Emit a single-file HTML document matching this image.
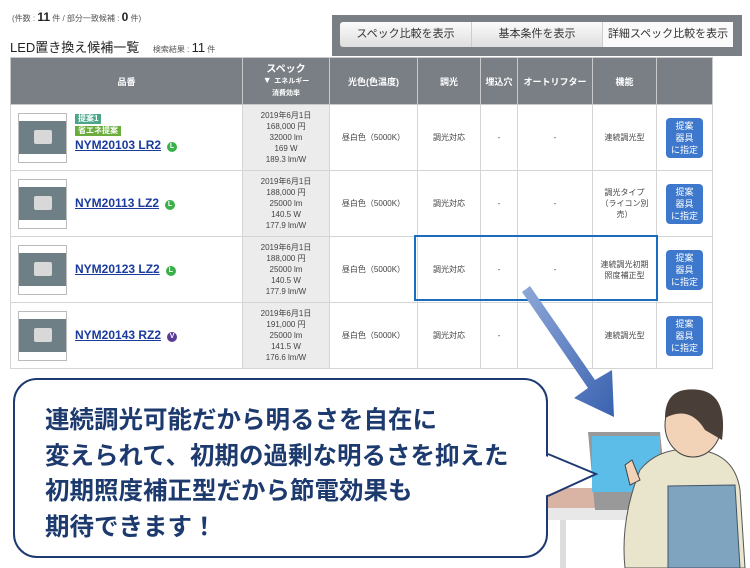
<!DOCTYPE html>
<html><head><meta charset="utf-8"><style>
*{margin:0;padding:0;box-sizing:border-box}
body{width:750px;height:568px;background:#fff;position:relative;overflow:hidden;font-family:"Liberation Sans","Noto Sans CJK JP",sans-serif;color:#333}
.a{position:absolute}
table{border-collapse:collapse;position:absolute;left:10px;top:57px;table-layout:fixed}
td,th{border:1px solid #d4d4d4;text-align:center;font-size:8px;color:#444;font-weight:normal}
th{background:#7a7f85;color:#fff;border-color:#c9c9c9;height:47px;font-weight:bold;font-size:9px}
tr.r td{height:66px}
td.sp{background:#ececec;font-size:8px;line-height:11px}
.img{position:absolute;left:7px;top:8px;width:49px;height:50px;border:1px solid #bbb;background:#fff}
.img i{position:absolute;left:0;right:0;top:7px;height:33px;background:#6e8086}
.img b{position:absolute;left:15px;top:16px;width:18px;height:14px;background:#d8d8d8;border-radius:2px}
.nm{position:absolute;left:64px;font-size:12px;font-weight:bold;color:#1a3a9c;text-decoration:underline}
.ic{display:inline-block;width:10px;height:10px;border-radius:50%;background:#3bb04a;color:#fff;font-size:7px;line-height:10px;text-align:center;margin-left:6px;vertical-align:1px;text-decoration:none}
.btn{display:inline-block;width:37px;height:40px;background:#3d78cc;border-radius:4px;color:#fff;font-size:9px;line-height:12px;padding-top:2px}
.tag{position:absolute;left:64px;font-size:8px;color:#fff;font-weight:bold;padding:0 3px;height:10px;line-height:10px}
.bub{position:absolute;left:13px;top:378px;width:535px;height:180px;border:2px solid #1d3a72;border-radius:24px;background:#fff}
.bt{position:absolute;left:45px;top:403px;font-size:24.5px;line-height:35.5px;color:#1d3a6e;font-weight:bold;white-space:nowrap}
</style></head><body>
<div class="a" style="left:12px;top:10px;font-size:8px;color:#555">(件数 : <b style="font-size:12px;color:#222">11</b> 件 / 部分一致候補 : <b style="font-size:12px;color:#222">0</b> 件)</div>
<div class="a" style="left:10px;top:37px;font-size:13px;color:#222">LED置き換え候補一覧 <span style="font-size:8px;color:#555;margin-left:10px">検索結果 : <span style="font-size:13px;color:#222">11</span> 件</span></div>
<div class="a" style="left:332px;top:15px;width:410px;height:41px;background:#7a7f85"></div>
<div class="a" style="left:340px;top:22px;width:393px;height:25px;border-radius:3px;background:linear-gradient(#fbfbfb,#dedede);font-size:11px;color:#333;display:flex">
<div style="width:132px;text-align:center;line-height:25px;border-right:1px solid #ccc">スペック比較を表示</div>
<div style="width:131px;text-align:center;line-height:25px;border-right:1px solid #ccc">基本条件を表示</div>
<div style="width:130px;text-align:center;line-height:25px;background:#fafafa">詳細スペック比較を表示</div></div>
<table>
<colgroup><col style="width:232px"><col style="width:87px"><col style="width:88px"><col style="width:63px"><col style="width:37px"><col style="width:75px"><col style="width:64px"><col style="width:56px"></colgroup>
<tr><th>品番</th><th style="line-height:11px"><span style="font-size:10px">スペック</span><br>▼ <span style="font-size:7px">エネルギー</span><br><span style="font-size:7px">消費効率</span></th><th>光色(色温度)</th><th>調光</th><th>埋込穴</th><th>オートリフター</th><th>機能</th><th></th></tr>
<tr class="r"><td style="position:relative"><div class="img"><i></i><b></b></div><div class="tag" style="top:9px;background:#4aa58b">提案1</div><div class="tag" style="top:21px;background:#6aad3c">省エネ提案</div><div class="nm" style="top:33px">NYM20103 LR2<span class="ic">L</span></div></td><td class="sp">2019年6月1日<br>168,000 円<br>32000 lm<br>169 W<br>189.3 lm/W</td><td>昼白色（5000K）</td><td>調光対応</td><td>-</td><td>-</td><td>連続調光型</td><td><span class="btn">提案<br>器具<br>に指定</span></td></tr>
<tr class="r"><td style="position:relative"><div class="img"><i></i><b></b></div><div class="nm" style="top:25px">NYM20113 LZ2<span class="ic">L</span></div></td><td class="sp">2019年6月1日<br>188,000 円<br>25000 lm<br>140.5 W<br>177.9 lm/W</td><td>昼白色（5000K）</td><td>調光対応</td><td>-</td><td>-</td><td style="line-height:11px">調光タイプ<br>（ライコン別<br>売）</td><td><span class="btn">提案<br>器具<br>に指定</span></td></tr>
<tr class="r"><td style="position:relative"><div class="img"><i></i><b></b></div><div class="nm" style="top:25px">NYM20123 LZ2<span class="ic">L</span></div></td><td class="sp">2019年6月1日<br>188,000 円<br>25000 lm<br>140.5 W<br>177.9 lm/W</td><td>昼白色（5000K）</td><td>調光対応</td><td>-</td><td>-</td><td style="line-height:11px">連続調光初期<br>照度補正型</td><td><span class="btn">提案<br>器具<br>に指定</span></td></tr>
<tr class="r"><td style="position:relative"><div class="img"><i></i><b></b></div><div class="nm" style="top:25px">NYM20143 RZ2<span class="ic" style="background:#5a3a95">V</span></div></td><td class="sp">2019年6月1日<br>191,000 円<br>25000 lm<br>141.5 W<br>176.6 lm/W</td><td>昼白色（5000K）</td><td>調光対応</td><td>-</td><td>-</td><td>連続調光型</td><td><span class="btn">提案<br>器具<br>に指定</span></td></tr>
</table>
<div class="a" style="left:414px;top:235px;width:244px;height:66px;border:2px solid #1a6cc0"></div>
<svg class="a" style="left:0;top:0" width="750" height="568">
<defs><linearGradient id="g" x1="0" y1="0" x2="1" y2="1"><stop offset="0" stop-color="#8fa8d8"/><stop offset="1" stop-color="#3a62b0"/></linearGradient></defs>
<polygon points="522,292 530,286 595,380 612,370 614,417 574,398 588,388" fill="url(#g)"/>
<rect x="548" y="488" width="120" height="20" fill="#d9b3a3"/>
<rect x="548" y="508" width="125" height="12" fill="#e8e8e8"/>
<rect x="560" y="520" width="6" height="48" fill="#ddd"/>
<polygon points="588,432 660,432 668,510 595,510" fill="#999"/>
<rect x="592" y="436" width="68" height="56" fill="#5cbde8"/>
<path d="M640,470 Q660,445 700,450 Q735,455 740,490 L745,568 L625,568 Q620,520 640,470Z" fill="#e9e4cc" stroke="#555" stroke-width="1"/>
<path d="M668,486 L735,485 L740,568 L668,568Z" fill="#7ea4c0" stroke="#456" stroke-width="1"/>
<ellipse cx="693" cy="425" rx="28" ry="32" fill="#f2d3b8" stroke="#444"/>
<path d="M665,418 Q665,385 700,390 Q728,395 722,440 L705,430 Q690,405 665,418Z" fill="#4a3e38"/>
<path d="M625,465 L632,460 L640,480 L630,485Z" fill="#f2d3b8" stroke="#444"/>
</svg>
<div class="bub"></div>
<svg class="a" style="left:540px;top:440px" width="70" height="70"><polygon points="0,14 56,34 0,58" fill="#fff"/><polyline points="8,14 56,34 8,56" fill="none" stroke="#1d3a72" stroke-width="2"/></svg>
<div class="bt">連続調光可能だから明るさを自在に<br>変えられて、初期の過剰な明るさを抑えた<br>初期照度補正型だから節電効果も<br>期待できます！</div>
</body></html>
